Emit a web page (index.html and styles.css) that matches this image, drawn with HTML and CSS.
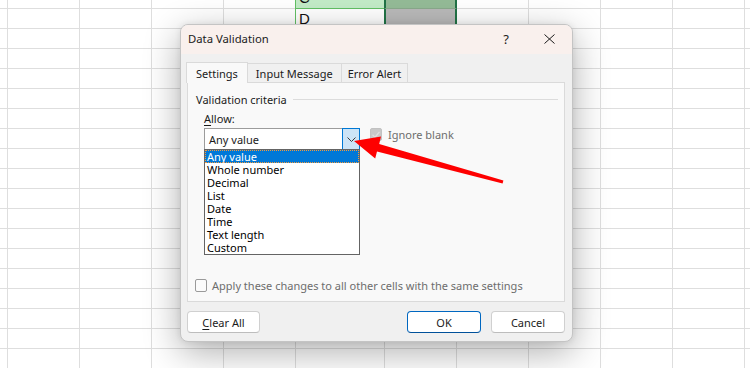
FILE: index.html
```html
<!DOCTYPE html>
<html>
<head>
<meta charset="utf-8">
<link rel="stylesheet" href="styles.css">
</head>
<body>
<div class="sheet">
  <div class="col w8"></div>
  <div class="col w72"></div>
  <div class="col w72"></div>
  <div class="col w72"></div>
  <div class="col w72"></div>
  <div class="col colc">
    <div class="cell c-top"><span>C</span></div>
    <div class="cell c-d"><span>D</span></div>
  </div>
  <div class="col w72">
    <div class="cell e-cell e-top"></div>
    <div class="cell e-cell e-d"></div>
  </div>
  <div class="col w72"></div>
  <div class="col w72"></div>
  <div class="col w72"></div>
  <div class="col w72"></div>
  <div class="col rest"></div>
</div>

<div class="dialog">
  <div class="titlebar">
    <span class="title">Data Validation</span>
    <span class="help">?</span>
    <svg class="close" width="11" height="10" viewBox="0 0 11 10"><path d="M0.5 0.5 L10.5 9.5 M10.5 0.5 L0.5 9.5" stroke="#1a1a1a" stroke-width="1" fill="none"/></svg>
  </div>
  <div class="body">
    <div class="tabs">
      <div class="tab active">Settings</div>
      <div class="tab">Input Message</div>
      <div class="tab">Error Alert</div>
    </div>
    <div class="panel">
      <div class="group-head"><span>Validation criteria</span><i class="rule"></i></div>
      <div class="label"><u>A</u>llow:</div>
      <div class="allow-row">
        <div class="combo">
          <span class="combo-val">Any value</span>
          <span class="combo-btn"><svg width="9" height="5" viewBox="0 0 9 5"><path d="M0.5 0.5 L4.5 4.5 L8.5 0.5" stroke="#3c3c3c" stroke-width="1" fill="none"/></svg></span>
          <ul class="listbox">
            <li class="sel">Any value</li>
            <li>Whole number</li>
            <li>Decimal</li>
            <li>List</li>
            <li>Date</li>
            <li>Time</li>
            <li>Text length</li>
            <li>Custom</li>
          </ul>
        </div>
        <div class="check disabled"><span class="box checked"><svg width="10" height="9" viewBox="0 0 10 9"><path d="M1.5 4.8 L4 7.2 L8.5 1.8" stroke="#dedede" stroke-width="1.3" fill="none"/></svg></span>Ignore blank</div>
      </div>
      <div class="check apply"><span class="box"></span>Apply these changes to all other cells with the same settings</div>
    </div>
    <div class="buttons">
      <button class="btn clear"><u>C</u>lear All</button>
      <button class="btn primary">OK</button>
      <button class="btn">Cancel</button>
    </div>
  </div>
</div>

<svg class="arrow" width="750" height="368" viewBox="0 0 750 368">
  <polygon points="354,141 381,136.5 379.2,144 503.4,180.6 502.6,183.4 377,151.5 375.2,158.5" fill="#fe0000"/>
</svg>
</body>
</html>
```

FILE: styles.css
```css
* { box-sizing: border-box; }

body {
  margin: 0;
  width: 750px;
  height: 368px;
  overflow: hidden;
  position: relative;
  background: #ffffff;
  font-family: "Noto Sans", sans-serif;
}

/* spreadsheet background */
.sheet {
  display: flex;
  height: 368px;
}
.col {
  flex: none;
  height: 100%;
  border-right: 1px solid #dedede;
  background-image: linear-gradient(#dedede 1px, transparent 1px);
  background-size: 100% 20px;
  background-position: 0 8px;
}
.w8 { width: 8px; }
.w72 { width: 72px; }
.colc { width: 90px; margin-left: -1px; }
.rest { flex: 1; border-right: none; }

.cell {
  font-family: "Liberation Sans", Arial, sans-serif;
  font-size: 15px;
  color: #111;
  overflow: hidden;
  display: flex;
  align-items: flex-end;
}
.cell span { line-height: 20px; padding-left: 3px; }
.c-top {
  height: 9px;
  background: #c3ebc7;
  border-left: 1px solid #62c064;
  border-bottom: 1px solid #62c064;
}
.c-d {
  height: 20px;
  background: #ffffff;
  border-left: 1px solid #62c064;
}
.e-cell {
  margin: 0 -1px;
  border-left: 2px solid #217346;
  border-right: 2px solid #217346;
}
.e-top { height: 9px; background: #94bb97; border-bottom: 1px solid #8aa98c; }
.e-d { height: 20px; background: #bababa; }

/* dialog */
.dialog {
  position: absolute;
  left: 180px;
  top: 24px;
  width: 393px;
  height: 318px;
  border: 1px solid #c4c4c4;
  border-radius: 8px;
  background: #f0f0f0;
  box-shadow: 0 10px 36px rgba(0, 0, 0, 0.32), 0 0 6px rgba(0, 0, 0, 0.08);
  overflow: hidden;
  display: flex;
  flex-direction: column;
  font-size: 11px;
  color: #1b1b1b;
}
.titlebar {
  height: 29px;
  flex: none;
  background: #f9f0ed;
  display: flex;
  align-items: center;
  padding: 0 17px 2px 7px;
}
.title { flex: 1; font-size: 11.3px; }
.help { font-size: 13px; margin-right: 35px; color: #1a1a1a; }
.close { display: block; }

.body {
  flex: 1;
  display: flex;
  flex-direction: column;
  padding: 8px 7px 8px 6px;
}
.tabs {
  display: flex;
  height: 20px;
  margin-left: -1px;
  position: relative;
  z-index: 1;
}
.tab {
  height: 19px;
  margin-top: 1px;
  padding: 0 8px;
  border: 1px solid #dadada;
  border-bottom: none;
  background: #f0f0f0;
  display: flex;
  align-items: center;
  margin-left: -1px;
}
.tab:first-child { margin-left: 0; }
.tab:last-child { padding: 0 6px; }
.tab.active {
  height: 21px;
  margin-top: 0;
  padding: 0 9px;
  background: #f9f9f9;
  position: relative;
  z-index: 2;
}
.panel {
  height: 220px;
  flex: none;
  border: 1px solid #dadada;
  background: #f9f9f9;
  display: flex;
  flex-direction: column;
}
.group-head {
  display: flex;
  align-items: center;
  gap: 6px;
  height: 16px;
  margin: 8px 6px 0 8px;
}
.rule { flex: 1; height: 1px; background: #dcdcdc; }
.label {
  margin: 4px 0 0 16px;
  height: 16px;
  line-height: 16px;
}
.label u, .btn u { text-decoration-thickness: 1px; text-underline-offset: 2px; }
.allow-row {
  display: flex;
  align-items: flex-start;
  margin: 1px 0 0 16px;
}
.combo {
  position: relative;
  width: 156px;
  height: 22px;
  border: 1px solid #9c9c9c;
  background: #ffffff;
  display: flex;
  align-items: center;
}
.combo-val { flex: 1; padding-left: 4px; }
.combo-btn {
  align-self: stretch;
  width: 18px;
  margin: -1px -1px -1px 0;
  border: 1px solid #0078d4;
  background: #cce4f7;
  display: flex;
  align-items: center;
  justify-content: center;
}
.combo-btn svg { display: block; margin-top: 1px; }
.listbox {
  position: absolute;
  left: -1px;
  top: 20px;
  width: 156px;
  margin: 0;
  padding: 0;
  list-style: none;
  border: 1px solid #646464;
  background: #ffffff;
  color: #000;
  z-index: 3;
}
.listbox li {
  height: 13px;
  line-height: 13px;
  padding-left: 2px;
}
.listbox li.sel {
  background: #0078d7;
  color: #ffffff;
  outline: 1px dotted #f39a3c;
  outline-offset: -1px;
}
.check {
  display: flex;
  align-items: center;
  height: 13px;
}
.box {
  width: 12px;
  height: 13px;
  border: 1px solid #9a9a9a;
  border-radius: 2px;
  background: #fbfbfb;
  margin-right: 5px;
  display: flex;
  align-items: center;
  justify-content: center;
}
.box.checked { background: #c8c8c8; border-color: #c2c2c2; }
.box svg { display: block; }
.disabled { margin-left: 10px; color: #6d6d6d; }
.disabled .box { margin-right: 6px; }
.apply {
  margin: auto 0 9px 7px;
  color: #6d6d6d;
}

.buttons {
  display: flex;
  margin-top: 9px;
  height: 22px;
  gap: 10px;
}
.btn {
  width: 74px;
  height: 22px;
  border: 1px solid #d0d0d0;
  border-bottom-color: #bdbdbd;
  border-radius: 4px;
  background: #ffffff;
  font-family: "Noto Sans", sans-serif;
  font-size: 11px;
  color: #1b1b1b;
  padding: 0;
}
.clear { width: 73px; margin-right: auto; }
.primary { border-color: #0067c0; border-bottom-color: #00519a; }

.arrow {
  position: absolute;
  left: 0;
  top: 0;
  pointer-events: none;
}
```
